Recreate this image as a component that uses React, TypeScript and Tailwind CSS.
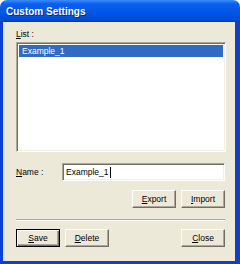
import type { ReactNode } from 'react'

const font = { fontFamily: '"Liberation Sans", Arial, sans-serif' }

function Mn({ children }: { children: string }) {
  return <span className="underline underline-offset-[1px]">{children}</span>
}

function Button({ children, isDefault, className = '' }: { children: ReactNode; isDefault?: boolean; className?: string }) {
  return (
    <div
      className={`h-[18px] w-[44px] flex items-center justify-center text-[8.5px] text-black bg-[#ece9d8] ${
        isDefault
          ? 'border border-black shadow-[inset_1px_1px_0_#fff,inset_-1px_-1px_0_#716f64,inset_-2px_-2px_0_#aca899]'
          : 'border border-t-white border-l-white border-r-[#716f64] border-b-[#716f64] shadow-[inset_-1px_-1px_0_#aca899]'
      } ${className}`}
    >
      {children}
    </div>
  )
}

export default function App() {
  return (
    <div className="w-[240px] h-[264px] flex flex-col bg-white" style={font}>
      {/* title bar */}
      <div className="h-[22px] shrink-0 rounded-t-[7px] bg-[linear-gradient(180deg,#3a8cf9_0%,#0a5fee_18%,#0058e8_55%,#0049d6_90%,#003bb8_100%)] flex items-center pl-[6px]">
        <span className="text-white font-bold text-[10px] [text-shadow:1px_1px_0_#0a2a8c]">Custom Settings</span>
      </div>

      {/* body */}
      <div className="flex-1 flex flex-col bg-[#ece9d8] border-l-[3px] border-r-[5px] border-b-[3px] border-[#0a3fd8] pl-[13px] pr-[9px] pt-[7px] text-[8.5px] text-black">
        <div className="h-[13px] leading-[11px]">
          <Mn>L</Mn>ist :
        </div>
        <div className="h-[110px] bg-white border border-t-[#aca899] border-l-[#aca899] border-r-white border-b-white shadow-[inset_1px_1px_0_#716f64,inset_-1px_-1px_0_#f1efe2] p-[2px]">
          <div className="h-[12px] bg-[#316ac5] text-white pl-[3px] leading-[12px]">Example_1</div>
        </div>

        <div className="mt-[11px] flex items-center h-[18px]">
          <div className="w-[46px]">
            <Mn>N</Mn>ame :
          </div>
          <div className="flex-1 mr-[1px] h-[18px] bg-white border border-t-[#aca899] border-l-[#aca899] border-r-white border-b-white shadow-[inset_1px_1px_0_#716f64,inset_-1px_-1px_0_#f1efe2] flex items-center pl-[3px]">
            <span>Example_1</span>
            <span className="w-px h-[11px] bg-black ml-px" />
          </div>
        </div>

        <div className="mt-[9px] flex justify-end gap-[5px] pr-[1px]">
          <Button>
            <Mn>E</Mn>xport
          </Button>
          <Button>
            <Mn>I</Mn>mport
          </Button>
        </div>

        <div className="mt-[11px] mr-[1px] h-[2px] border-t border-t-[#aca899] border-b border-b-white" />

        <div className="mt-[8px] flex gap-[5px] pr-[1px]">
          <Button isDefault>
            <Mn>S</Mn>ave
          </Button>
          <Button>
            <Mn>D</Mn>elete
          </Button>
          <div className="flex-1" />
          <Button>
            <Mn>C</Mn>lose
          </Button>
        </div>
      </div>
    </div>
  )
}
